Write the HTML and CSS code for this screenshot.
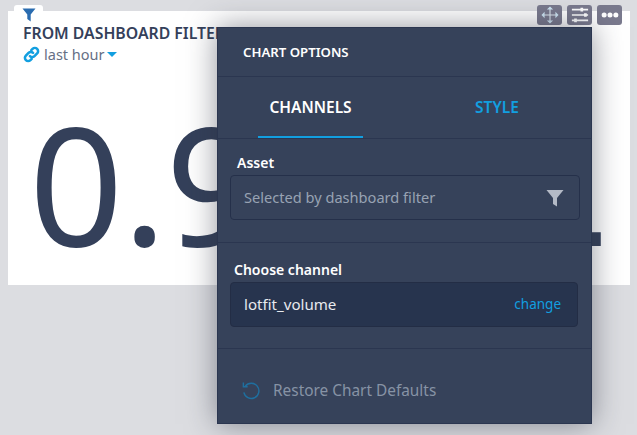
FILE: index.html
```html
<!DOCTYPE html>
<html lang="en">
<head>
<meta charset="utf-8">
<title>Chart options</title>
<link rel="stylesheet" href="styles.css">
</head>
<body>
<div class="stage">
  <section class="card">
    <h2 class="card-title">FROM DASHBOARD FILTER</h2>
    <div class="range">
      <svg class="link-icon" viewBox="0 0 16 16"><g fill="none" stroke="#129fe0" stroke-width="2.400" stroke-linecap="round"><path d="M6.500 9.500a3 3 0 0 0 4.300 0l2.500-2.500a3 3 0 0 0-4.300-4.300L7.800 3.900"/><path d="M9.500 6.500a3 3 0 0 0-4.300 0L2.700 9a3 3 0 0 0 4.300 4.300l1.200-1.200"/></g></svg>
      <span>last hour</span>
      <span class="caret"></span>
    </div>
    <div class="big-value"><span>0.9</span><span class="last-digit">1</span></div>
  </section>

  <div class="filter-tab">
    <svg class="tab-icon" viewBox="0 0 14 14"><path d="M0.500 0.500h13L8.700 6.500v7L5.300 11V6.500z"/></svg>
  </div>

  <div class="tools">
    <button class="tool"><svg viewBox="0 0 20 20"><g fill="none" stroke="#dfeaf2" stroke-width="1.200"><path d="M10 2v16M2 10h16"/></g><path fill="#cfe6f5" d="M10 0.500l3.500 3.500h-7zM10 19.500l-3.500-3.500h7zM0.500 10L4 6.500v7zM19.500 10L16 13.500v-7z"/></svg></button>
    <button class="tool"><svg viewBox="0 0 20 20"><g stroke="#fff" stroke-width="1.800"><path d="M1 4h18M1 10h18M1 16h18"/><path stroke-width="3" d="M12 2v4M16 8v4M5 14v4"/></g></svg></button>
    <button class="tool"><svg viewBox="0 0 20 20"><g fill="#fff"><circle cx="3.500" cy="10" r="2.800"/><circle cx="10" cy="10" r="2.800"/><circle cx="16.500" cy="10" r="2.800"/></g></svg></button>
  </div>

  <aside class="panel">
    <header class="panel-head">CHART OPTIONS</header>
    <nav class="tabs">
      <div class="tab tab-active">CHANNELS</div>
      <div class="tab tab-link">STYLE</div>
    </nav>
    <div class="section section-asset">
      <div class="label label-asset">Asset</div>
      <div class="select">
        <span class="field-text">Selected by dashboard filter</span>
        <svg class="select-icon" viewBox="0 0 18 18"><path d="M0.500 1h17L11 9v8.500L7 15V9z"/></svg>
      </div>
    </div>
    <div class="section section-channel">
      <div class="label">Choose channel</div>
      <div class="channel">
        <span class="field-text">lotfit_volume</span>
        <span class="change field-text">change</span>
      </div>
    </div>
    <div class="restore">
      <svg class="restore-icon" viewBox="0 0 20 20"><g fill="none" stroke="#1f6f9f" stroke-width="1.500"><path d="M4.500 5.500A8 8 0 1 1 3 12"/><path d="M2.500 1.500v4.500H7"/></g></svg>
      <span>Restore Chart Defaults</span>
    </div>
  </aside>
</div>
</body>
</html>
```

FILE: styles.css
```css
* { box-sizing: border-box; }
html, body { margin: 0; height: 100%; }
body {
  background: #dcdde1;
  font-family: "Noto Sans", "Open Sans", sans-serif;
  color: #34405a;
  overflow: hidden;
}
.stage { position: relative; width: 637px; height: 435px; padding: 11px 7px 0 8px; }

.card {
  height: 274px;
  background: #fff;
  padding: 13px 0 0 15px;
}
.filter-tab {
  position: absolute;
  left: 14px;
  top: 5px;
  width: 29px;
  height: 19px;
  padding: 3px 0 0 8px;
  background: #fff;
  border-radius: 3px;
}
.tab-icon {
  display: block;
  width: 14px;
  height: 14px;
  fill: #2a6cb0;
}
.card-title {
  margin: 0;
  font-size: 15.800px;
  line-height: 19px;
  font-weight: 600;
  white-space: nowrap;
  color: #34405a;
}
.range {
  display: flex;
  align-items: center;
  gap: 4px;
  height: 22px;
  font-size: 14.500px;
  color: #666f85;
}
.link-icon { width: 17px; height: 17px; }
.caret {
  width: 0;
  height: 0;
  margin-left: -2px;
  border-style: solid;
  border-width: 5px 5px 0;
  border-color: #129fe0 transparent transparent;
}
.big-value {
  display: flex;
  align-items: baseline;
  gap: 252px;
  margin: 29px 0 0 6px;
  font-size: 165px;
  line-height: 176px;
  font-weight: 400;
  white-space: nowrap;
  color: #34405a;
  letter-spacing: -1px;
}
.last-digit {
  font-family: "DejaVu Sans", sans-serif;
}

.tools {
  position: absolute;
  top: 5px;
  right: 15px;
  display: flex;
  gap: 5px;
}
.tool {
  width: 25px;
  height: 20px;
  padding: 0;
  border: 0;
  border-radius: 3px;
  background: #7a7a8e;
  display: flex;
  align-items: center;
  justify-content: center;
}
.tool svg { width: 18px; height: 18px; }

.panel {
  position: absolute;
  left: 217px;
  top: 27px;
  width: 375px;
  height: 397px;
  background: #36425a;
  color: #fff;
  border: 1px solid #2b3650;
  box-shadow: 0 0 28px rgba(40, 44, 60, 0.5);
}
.panel-head {
  height: 49px;
  padding: 15px 0 0 25px;
  font-size: 13.200px;
  line-height: 18px;
  font-weight: 600;
  border-bottom: 1px solid #2b3650;
}
.tabs {
  display: flex;
  height: 62px;
  padding: 0 0 0 40px;
  border-bottom: 1px solid #2b3650;
}
.tab {
  font-size: 15.500px;
  font-weight: 600;
  line-height: 60px;
  text-align: center;
}
.tab-active {
  width: 105px;
  height: 61px;
  border-bottom: 2px solid #129fe0;
}
.tab-link { width: 118px; margin-left: 75px; color: #129fe0; }
.section { padding: 0 13px; }
.section-asset { height: 104px; padding-top: 14px; border-bottom: 1px solid #2b3650; }
.section-channel { height: 106px; padding-top: 17px; border-bottom: 1px solid #2b3650; }
.label {
  font-size: 14px;
  line-height: 20px;
  font-weight: 600;
  padding-left: 3px;
  margin-bottom: 2px;
}
.label-asset { padding-left: 6px; }
.field-text { padding-bottom: 2px; }
.select {
  display: flex;
  align-items: center;
  justify-content: space-between;
  width: 350px;
  height: 45px;
  margin-left: -1px;
  padding: 0 15px 0 13px;
  border: 1px solid #25304a;
  border-radius: 4px;
  font-size: 14.600px;
  color: #98a2b3;
}
.select-icon { width: 18px; height: 18px; fill: #b4bac6; }
.channel {
  display: flex;
  align-items: center;
  justify-content: space-between;
  width: 348px;
  height: 45px;
  margin-left: -1px;
  padding: 0 16px 0 13px;
  background: #27344e;
  border: 1px solid #232d45;
  border-radius: 4px;
  font-size: 15.100px;
  color: #e8eaef;
}
.change { color: #129fe0; font-size: 13.500px; }
.restore {
  display: flex;
  align-items: center;
  gap: 13px;
  height: 83px;
  padding-left: 23px;
  font-size: 15.400px;
  color: #8793a5;
}
.restore-icon { width: 19px; height: 19px; }
```
